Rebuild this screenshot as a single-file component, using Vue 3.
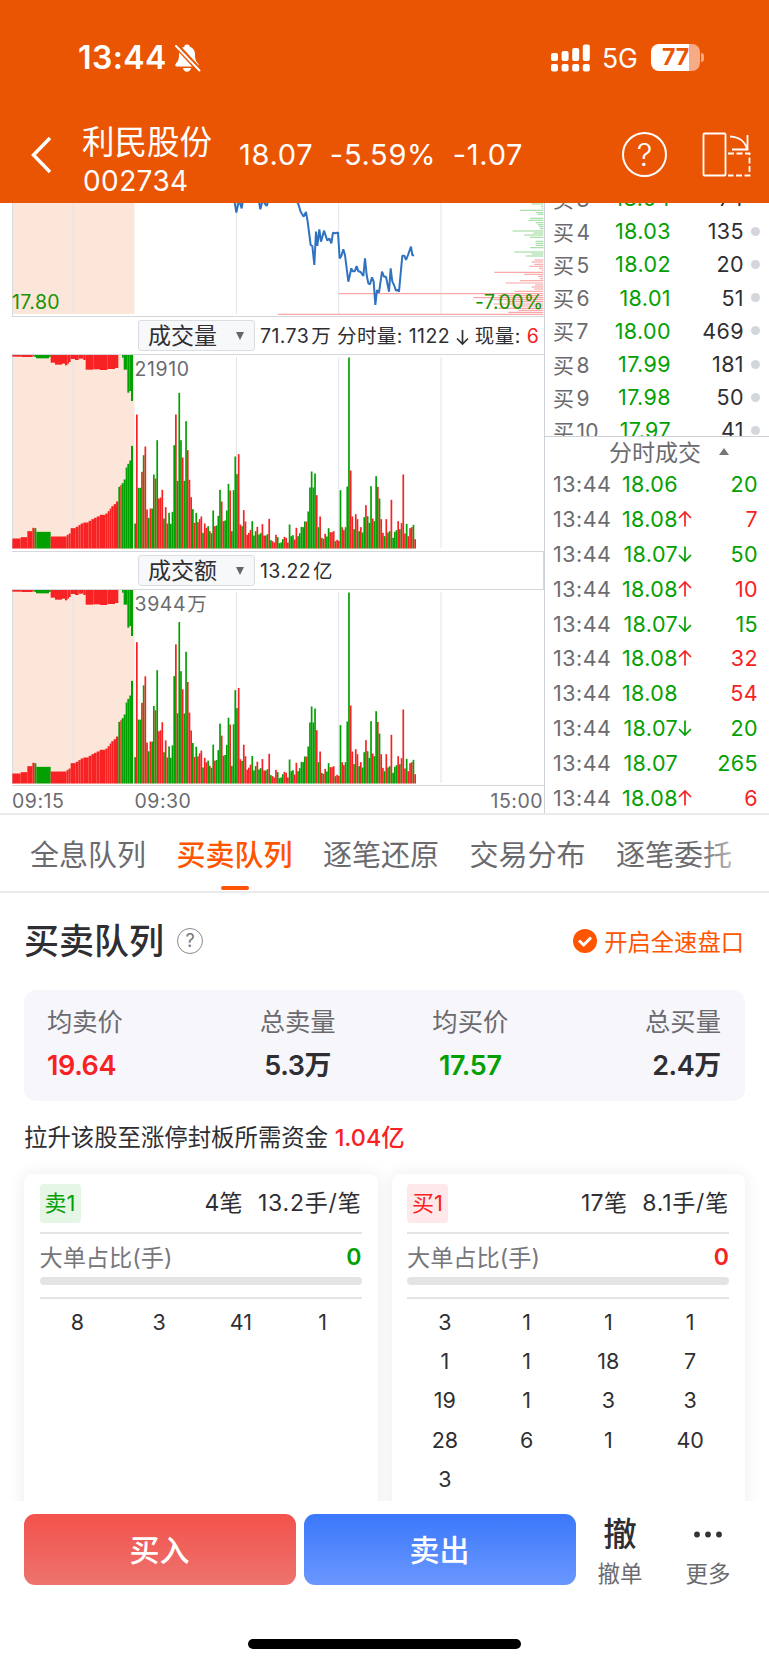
<script setup>
// one entry per minute from 09:30, negative = green bar
const minutes = [
    -75, 402, -182, -182, 230, -280, 306, 117, -92, 120, -120, -222, 210, -325, 150, 153, 176, -90, 124, 75,
    -107, -74, -110, -310, 402, -203, -467, -325, 273, -203, -382, 295, 206, 154, -118, 77, -107, 79, 88, 96,
    -47, 75, 62, -67, 52, -46, -114, 67, -69, -98, -176, 141, 82, -84, -114, -194, 174, -52, -175, -276,
    -223, 283, 72, -67, 115, 81, 41, 47, 56, -82, -39, -52, 65, -42, -46, 73, 39, -39, -43, 89,
    -25, 22, 18, 41, -34, -16, -18, -28, 35, 32, 18, -72, -37, -40, 27, 62, -37, -46, -65, -64,
    -81, 81, -111, -183, -231, -183, -225, 160, -64, 96, -32, 29, 44, -36, -61, 49, 49, 52, -22, 26,
    23, -175, 64, 55, -64, -186, -573, 234, 96, -58, 103, 88, -52, 64, -48, -94, 130, -97, -77, -187,
    90, -82, -217, 185, -150, 88, 47, -37, 88, -48, -52, 146, -32, -50, -55, 82, -58, 76, 222, 45,
    -74, 37, 61, 64, -71, 28
]

// call auction: [from, to, size, green]
const auctionBottom = [
    [37, 62, 30, 0], [62, 82, 34, 0], [82, 97, 52, 0], [97, 104, 62, 0], [104, 109, 61, 1], [109, 152, 50, 1],
    [152, 200, 36, 0], [200, 206, 41, 0], [206, 212, 45, 0], [212, 227, 61, 0], [227, 235, 65, 0], [235, 242, 70, 0],
    [242, 250, 75, 0], [250, 266, 78, 0], [266, 274, 83, 0], [274, 282, 88, 0], [282, 290, 92, 0], [290, 299, 96, 0],
    [299, 316, 101, 0], [316, 323, 105, 0], [323, 329, 112, 0], [329, 334, 120, 0], [334, 341, 127, 0], [341, 348, 133, 0],
    [348, 355, 141, 0], [355, 361, 185, 1], [361, 365, 190, 0], [365, 371, 196, 1], [371, 377, 207, 1], [377, 382, 243, 1],
    [382, 388, 254, 1], [388, 393, 264, 1], [393, 399, 308, 1]
]
const auctionTop = [
    [37, 66, 5, 0], [66, 98, 6, 0], [98, 103, 4, 0], [103, 108, 6, 1], [108, 147, 10, 1], [147, 152, 6, 1],
    [152, 165, 23, 0], [165, 186, 29, 0], [186, 195, 26, 0], [195, 202, 31, 0], [202, 207, 26, 0], [207, 212, 21, 0],
    [212, 225, 12, 0], [225, 236, 15, 0], [236, 250, 11, 0], [250, 257, 15, 0], [257, 280, 44, 0], [280, 300, 43, 0],
    [300, 322, 45, 0], [322, 345, 42, 0], [345, 355, 39, 0], [366, 371, 8, 1], [371, 382, 44, 1], [382, 388, 113, 1],
    [388, 393, 108, 1], [393, 399, 138, 1]
]

const red = '#f62223'
const green = '#03a003'

function buildBars(baseline, top, boost) {
    const bars = []
    auctionBottom.forEach(([from, to, size, isGreen]) => {
        bars.push({ x: from / 3, w: (to - from) / 3, y: baseline - size / 3, h: size / 3, fill: isGreen ? green : red })
    })
    auctionTop.forEach(([from, to, size, isGreen]) => {
        bars.push({ x: from / 3, w: (to - from) / 3, y: top, h: size / 3, fill: isGreen ? green : red })
    })
    minutes.forEach((value, i) => {
        const factor = 1 + boost * Math.max(0, 1 - i / 80)
        const h = (Math.abs(value) / 3) * factor
        bars.push({ x: 134.3 + i * 1.697, w: 1.7, y: baseline - h, h, fill: value < 0 ? green : red })
    })
    return bars
}

const volumeBars = buildBars(193.5, 0, 0)
const amountBars = buildBars(193.5, 0, 0.055)

// price distribution on the right edge: [y, left]
const greenLevels = [
    [12, 440], [19, 468], [25, 472], [31, 405], [38, 452], [43, 458], [55, 435], [61, 430], [68, 452], [74, 458],
    [80, 462], [86, 465], [93, 383], [99, 445], [105, 418], [112, 435], [124, 452], [130, 452], [136, 452],
    [143, 435], [156, 388], [162, 440], [168, 422]
]
const redLevels = [
    [180, 448], [186, 440], [193, 448], [199, 433], [205, 462], [211, 470], [217, 328], [223, 418], [229, 460],
    [236, 465], [242, 405], [249, 362], [255, 450], [261, 440], [267, 448], [274, 388], [281, -139], [287, 340],
    [293, 265], [299, 325], [305, 365], [312, 325], [318, 380], [325, 340], [331, 400], [337, 370], [343, -322]
]

const priceLines = [
    '703,0 709,38 717,0 725,25 729,0',
    '776,0 781,28 788,0 794,10 800,18 806,0',
    '888,0 895,12 902,35 911,50 918,36 923,65 932,135 937,138 943,195 948,95 952,138 958,88 963,125 972,92 982,122 988,115 994,130 999,98 1006,100 1014,97 1019,175 1024,168 1030,148 1035,165 1045,245 1054,205 1058,214 1064,214 1070,198 1075,214 1082,216 1090,228 1095,175 1100,225 1105,250 1110,253 1116,232 1121,245 1126,315 1131,270 1137,278 1146,215 1152,230 1158,230 1167,275 1172,205 1177,245 1182,255 1188,272 1193,270 1197,275 1207,167 1213,167 1218,180 1224,165 1233,140 1237,165 1242,167'
]

const bids = [
    { level: 3, price: '18.04', volume: 74 },
    { level: 4, price: '18.03', volume: 135 },
    { level: 5, price: '18.02', volume: 20 },
    { level: 6, price: '18.01', volume: 51 },
    { level: 7, price: '18.00', volume: 469 },
    { level: 8, price: '17.99', volume: 181 },
    { level: 9, price: '17.98', volume: 50 },
    { level: 10, price: '17.97', volume: 41 }
]

const ticks = [
    { price: '18.06', arrow: '', volume: 20, side: 'green' },
    { price: '18.08', arrow: 'up', volume: 7, side: 'red' },
    { price: '18.07', arrow: 'down', volume: 50, side: 'green' },
    { price: '18.08', arrow: 'up', volume: 10, side: 'red' },
    { price: '18.07', arrow: 'down', volume: 15, side: 'green' },
    { price: '18.08', arrow: 'up', volume: 32, side: 'red' },
    { price: '18.08', arrow: '', volume: 54, side: 'red' },
    { price: '18.07', arrow: 'down', volume: 20, side: 'green' },
    { price: '18.07', arrow: '', volume: 265, side: 'green' },
    { price: '18.08', arrow: 'up', volume: 6, side: 'red' }
]

const tabs = ['全息队列', '买卖队列', '逐笔还原', '交易分布', '逐笔委托', '逐笔']

const stats = [
    { label: '均卖价', value: '19.64', color: 'red' },
    { label: '总卖量', value: '5.3万', color: '' },
    { label: '均买价', value: '17.57', color: 'green' },
    { label: '总买量', value: '2.4万', color: '' }
]

const queues = [
    { name: '卖1', side: 'green', count: '4笔', average: '13.2手/笔', orders: [8, 3, 41, 1] },
    { name: '买1', side: 'red', count: '17笔', average: '8.1手/笔', orders: [3, 1, 1, 1, 1, 1, 18, 7, 19, 1, 3, 3, 28, 6, 1, 40, 3] }
]
</script>

<template>
    <div class="page">
        <header class="header">
            <div class="status">
                <span class="status__time">13:44</span>
                <svg class="status__bell" width="27" height="28" viewBox="0 0 27 28">
                    <path fill="#fff" d="M13 0.5C10.8.5 10.3 2 10.3 2.8 6.5 4 5 7.200 5 10.500C5 16 3.700 17.500 2 19.500C.8 21 1 22.500 2.500 22.500H23.500C25 22.500 25.200 21 24 19.500C22.300 17.500 21 16 21 10.500C21 7 19.400 4 15.700 2.800C15.700 2 15.200.5 13 .5ZM9 24H17C16.600 26.500 15 27.700 13 27.700S9.400 26.500 9 24Z" />
                    <path stroke="#ea5504" stroke-width="5.500" d="M1 0L27 28" />
                    <path stroke="#fff" stroke-width="2" stroke-linecap="round" d="M2 2L25.500 26.500" />
                </svg>
                <svg class="status__signal" width="39" height="28" viewBox="0 0 39 28" fill="#fff">
                    <rect x="0" y="9" width="7" height="8" rx="2" />
                    <rect x="10.600" y="7" width="7" height="10" rx="2" />
                    <rect x="21.200" y="4" width="7" height="13" rx="2" />
                    <rect x="31.800" y="0.500" width="7" height="16.500" rx="2" />
                    <rect v-for="n in 4" :key="n" :x="(n - 1) * 10.6" y="20" width="7" height="7.500" rx="2" />
                </svg>
                <span class="status__net">5G</span>
                <div class="battery"><span>77</span></div>
                <i class="battery__nub"></i>
            </div>
            <div class="nav">
                <svg class="nav__back" width="22" height="40" viewBox="0 0 22 40">
                    <path fill="none" stroke="#fff" stroke-width="3.400" d="M20 3L3.500 20L20 37" />
                </svg>
                <div class="nav__stock">
                    <b>利民股份</b>
                    <span>002734</span>
                </div>
                <div class="nav__quote">
                    <span>18.07</span>
                    <span>-5.59%</span>
                    <span>-1.07</span>
                </div>
                <div class="nav__help">?</div>
                <svg class="nav__rotate" width="50" height="46" viewBox="0 0 50 46" fill="none" stroke="#fff" stroke-width="1.800">
                    <rect x="1.500" y="1.500" width="22" height="42" rx="1" />
                    <path stroke-dasharray="6 2.500" d="M26 21.500H47.500V43.500H26" />
                    <path d="M28 4.500C37 5 43.500 9.500 44.800 17M45.500 3V17.500H30" />
                </svg>
            </div>
        </header>

        <main class="market">
            <section class="charts">
                <svg class="chart chart--price" width="532" height="113" viewBox="12 203 532 113">
                    <rect x="12" y="203" width="122.500" height="111" fill="#fce6da" />
                    <path stroke="#e0e5ea" d="M73 203V314M236.500 203V314M338.700 203V314M441 203V314" />
                    <path stroke="#d8dce2" d="M12.500 203V316" />
                    <g transform="translate(385 200) scale(.33333)">
                        <path v-for="level in greenLevels" :key="level[0]" stroke="#a3dca3" stroke-width="3.500" :d="`M${level[1]} ${level[0]}H475`" />
                        <path v-for="level in redLevels" :key="level[0]" stroke="#f9a7a8" stroke-width="3.500" :d="`M${level[1]} ${level[0]}H475`" />
                    </g>
                    <g transform="translate(0 200) scale(.33333)" fill="none" stroke="#2f72c0" stroke-width="6" stroke-linejoin="bevel">
                        <polyline v-for="line in priceLines" :key="line" :points="line" />
                    </g>
                    <text class="price-label" x="12" y="309">17.80</text>
                    <text class="price-label" x="543.500" y="309" text-anchor="end">-7.00%</text>
                </svg>
                <div class="toolbar">
                    <div class="select">成交量<i></i></div>
                    <span class="toolbar__text">71.73<em>万</em> 分时量: 1122 <svg width="13" height="18" viewBox="0 0 13 18"><path fill="none" stroke="#333" stroke-width="1.700" d="M6.500 2V16M1 10.500L6.500 16L12 10.500" /></svg> 现量: <span class="red">6</span></span>
                </div>
                <svg class="chart" width="532" height="196" viewBox="12 0 532 196">
                    <rect x="12" y="0" width="122.500" height="193.500" fill="#fce6da" />
                    <path stroke="#e0e5ea" d="M73 0V193M236.500 2V193M338.700 2V193M441 2V193" />
                    <path stroke="#d8dce2" d="M12.500 0V194" />
                    <rect v-for="(bar, i) in volumeBars" :key="i" :x="bar.x" :y="bar.y" :width="bar.w" :height="bar.h" :fill="bar.fill" />
                    <text class="scale-label" x="134.500" y="21">21910</text>
                </svg>
                <div class="toolbar toolbar--amount">
                    <div class="select">成交额<i></i></div>
                    <span class="toolbar__text">13.22<em>亿</em></span>
                </div>
                <svg class="chart" width="532" height="195" viewBox="12 0 532 195">
                    <rect x="12" y="0" width="122.500" height="193.500" fill="#fce6da" />
                    <path stroke="#e0e5ea" d="M73 0V193M236.500 2V193M338.700 2V193M441 2V193" />
                    <path stroke="#d8dce2" d="M12.500 0V194" />
                    <rect v-for="(bar, i) in amountBars" :key="i" :x="bar.x" :y="bar.y" :width="bar.w" :height="bar.h" :fill="bar.fill" />
                    <text class="scale-label" x="134.500" y="21">3944<tspan dx="1">万</tspan></text>
                </svg>
                <div class="axis">
                    <span>09:15</span>
                    <span>09:30</span>
                    <span>15:00</span>
                </div>
            </section>

            <aside class="book">
                <div class="bids">
                    <div v-for="bid in bids" :key="bid.level" class="bid">
                        <span class="bid__name">买<span>{{ bid.level }}</span></span>
                        <span class="bid__price">{{ bid.price }}</span>
                        <span class="bid__volume">{{ bid.volume }}</span>
                        <i></i>
                    </div>
                </div>
                <div class="book__title">分时成交<i></i></div>
                <div v-for="(tick, i) in ticks" :key="i" class="tick">
                    <span class="tick__time">13:44</span>
                    <span class="tick__price">{{ tick.price }}</span>
                    <svg class="tick__arrow" width="14" height="18" viewBox="0 0 14 18" fill="none" stroke-width="1.700">
                        <path v-if="tick.arrow === 'up'" stroke="#f62223" d="M7 16.500V2M1 8L7 2L13 8" />
                        <path v-if="tick.arrow === 'down'" stroke="#03a003" d="M7 1.500V16M1 10L7 16L13 10" />
                    </svg>
                    <span class="tick__volume" :class="tick.side">{{ tick.volume }}</span>
                </div>
            </aside>
        </main>

        <nav class="tabs">
            <div v-for="(tab, i) in tabs" :key="i" class="tab" :class="{ 'tab--active': i === 1 }">{{ tab }}</div>
        </nav>

        <section class="queue">
            <div class="queue__head">
                <h2>买卖队列</h2>
                <span class="queue__help">?</span>
                <div class="queue__speed">
                    <svg width="24" height="24" viewBox="0 0 24 24">
                        <circle cx="12" cy="12" r="12" fill="#ff5500" />
                        <path fill="none" stroke="#fff" stroke-width="3" d="M6 11.500L10.700 16L18 8.500" />
                    </svg>
                    开启全速盘口
                </div>
            </div>

            <div class="stats">
                <div v-for="stat in stats" :key="stat.label" class="stat">
                    <span>{{ stat.label }}</span>
                    <b :class="stat.color">{{ stat.value }}</b>
                </div>
            </div>

            <p class="limit">拉升该股至涨停封板所需资金 <b>1.04亿</b></p>

            <div class="cards">
                <div v-for="queue in queues" :key="queue.name" class="card">
                    <div class="card__head">
                        <span class="badge" :class="`badge--${queue.side}`">{{ queue.name }}</span>
                        <span class="card__count">{{ queue.count }}</span>
                        <span class="card__average">{{ queue.average }}</span>
                    </div>
                    <div class="card__ratio">
                        <span>大单占比(手)</span>
                        <b :class="queue.side">0</b>
                    </div>
                    <div class="card__bar"></div>
                    <div class="card__orders">
                        <span v-for="(order, i) in queue.orders" :key="i">{{ order }}</span>
                    </div>
                </div>
            </div>
        </section>

        <footer class="footer">
            <div class="actions">
                <button class="button button--buy">买入</button>
                <button class="button button--sell">卖出</button>
                <div class="action action--cancel">
                    <b>撤</b>
                    <span>撤单</span>
                </div>
                <div class="action action--more">
                    <svg width="32" height="32" viewBox="0 0 32 32" fill="#333">
                        <circle cx="5" cy="16.500" r="2.900" />
                        <circle cx="16" cy="16.500" r="2.900" />
                        <circle cx="27" cy="16.500" r="2.900" />
                    </svg>
                    <span>更多</span>
                </div>
            </div>
            <div class="home"></div>
        </footer>
    </div>
</template>

<style>
body {
    margin: 0;
    background: #fff;
}
</style>

<style scoped>
.page {
    width: 769px;
    height: 1665px;
    overflow: hidden;
    display: flex;
    flex-direction: column;
    font-family: Inter, 'Noto Sans CJK SC', sans-serif;
    color: #2f2f33;
    background: #fff;
}

.page * {
    box-sizing: border-box;
}

i,
em {
    font-style: normal;
}

.red {
    color: #f62223;
}

.green {
    color: #03a003;
}

.header {
    height: 203px;
    flex: none;
    background: #ea5504;
    color: #fff;
}

.status {
    display: flex;
    align-items: center;
    height: 72px;
    padding: 43px 0 0 78px;
}

.status__time {
    width: 96px;
    font-size: 32px;
    font-weight: 600;
    letter-spacing: 0.4px;
}

.status__signal {
    margin-left: 350px;
}

.status__net {
    width: 61px;
    padding-left: 12px;
    font-size: 26.500px;
}

.battery {
    width: 49px;
    height: 27px;
    border-radius: 8px;
    background: linear-gradient(to right, #fff 77%, #f5ab85 77%);
    color: #ea5504;
    font-size: 23px;
    font-weight: 700;
    line-height: 27px;
    text-align: center;
}

.battery__nub {
    width: 3px;
    height: 9px;
    margin-left: 1px;
    border-radius: 0 4px 4px 0;
    background: #f5ab85;
}

.nav {
    display: flex;
    align-items: center;
    height: 125px;
    padding: 40px 0 0 30px;
}

.nav__stock {
    display: flex;
    flex-direction: column;
    width: 157px;
    margin-left: 30px;
    padding-top: 14px;
}

.nav__stock b {
    font-size: 32.500px;
    font-weight: 400;
    line-height: 39px;
}

.nav__stock span {
    padding-left: 1px;
    font-size: 28px;
    line-height: 38px;
    letter-spacing: 0.4px;
}

.nav__quote {
    display: flex;
    gap: 16.500px;
    width: 383px;
    font-size: 29px;
    letter-spacing: 0.7px;
}

.nav__help {
    width: 45px;
    height: 45px;
    border: 2px solid #fff;
    border-radius: 50%;
    font-size: 31px;
    font-weight: 300;
    line-height: 41px;
    text-align: center;
}

.nav__rotate {
    margin-left: 35px;
}

.market {
    display: flex;
    flex: none;
    height: 612px;
    border-bottom: 2px solid #ebebed;
}

.charts {
    width: 545px;
    padding-left: 12px;
    border-right: 1px solid #ced2d8;
}

.chart {
    display: block;
    border-bottom: 1px solid #d4d8dd;
    box-sizing: content-box !important;
}

.price-label {
    font-size: 19.500px;
    fill: #189400;
    letter-spacing: 0.4px;
}

.scale-label {
    font-size: 19.500px;
    fill: #6b6b6f;
    letter-spacing: 0.6px;
}

.toolbar {
    display: flex;
    align-items: center;
    height: 38px;
    padding-left: 126px;
    border-bottom: 1px solid #d4d8dd;
}

.toolbar--amount {
    border-right: 1px solid #d4d8dd;
}

.select {
    display: flex;
    align-items: center;
    justify-content: space-between;
    width: 117px;
    height: 31px;
    padding: 1px 10px 0 9px;
    border: 1px solid #dadee3;
    border-radius: 3px;
    background: #f7f8fa;
    font-size: 23px;
    line-height: 29px;
}

.select i {
    border: 4.500px solid transparent;
    border-top: 8px solid #666;
    border-bottom: 0;
}

.toolbar__text {
    padding-left: 5px;
    font-size: 19.500px;
    letter-spacing: 0.42px;
    line-height: 34px;
    white-space: nowrap;
}

.toolbar__text em {
    padding-left: 2px;
}

.toolbar__text svg {
    vertical-align: -3px;
}

.axis {
    display: flex;
    height: 28px;
    padding-right: 1px;
    color: #6b6b6f;
    font-size: 19.500px;
    letter-spacing: 0.5px;
    line-height: 30px;
}

.axis span:first-child {
    width: 122.500px;
}

.axis span:nth-child(2) {
    flex: 1;
}

.book {
    flex: 1;
    overflow: hidden;
}

.bids {
    display: flex;
    flex-direction: column;
    justify-content: flex-end;
    height: 234px;
    overflow: hidden;
    border-bottom: 1px solid #ced2d8;
}

.bid {
    position: relative;
    top: 11px;
    display: flex;
    flex: none;
    align-items: center;
    height: 33.200px;
    padding-left: 8px;
    font-size: 21.500px;
    letter-spacing: 0.4px;
}

.bid__name {
    width: 57px;
    padding-bottom: 1px;
    color: #6b6b6f;
    font-size: 21px;
    white-space: nowrap;
}

.bid__name span {
    padding-left: 2px;
}

.bid__price {
    width: 61px;
    color: #03a003;
    text-align: right;
}

.bid__volume {
    width: 73px;
    text-align: right;
}

.bid i {
    width: 9px;
    height: 9px;
    margin-left: 7px;
    border-radius: 50%;
    background: #d3d6db;
}

.book__title {
    display: flex;
    align-items: center;
    height: 30px;
    padding: 0 0 2px 64px;
    color: #6b6b6f;
    font-size: 23px;
}

.book__title i {
    margin-left: 18px;
    border: 5.500px solid transparent;
    border-bottom: 7px solid #77777b;
    border-top: 0;
}

.tick {
    display: flex;
    align-items: center;
    height: 34.800px;
    padding: 0 11px 0 8px;
    font-size: 21.500px;
    letter-spacing: 0.4px;
}

.tick__time {
    width: 64px;
    color: #6b6b6f;
    letter-spacing: 0.5px;
}

.tick__price {
    width: 61px;
    color: #03a003;
    text-align: right;
}

.tick__volume {
    flex: 1;
    text-align: right;
}

.tabs {
    position: relative;
    display: flex;
    flex: none;
    gap: 30.500px;
    height: 78px;
    padding-left: 30px;
    border-bottom: 2px solid #ebebed;
    overflow: hidden;
}

.tabs::after {
    content: '';
    position: absolute;
    right: 0;
    top: 0;
    width: 70px;
    height: 76px;
    background: linear-gradient(to right, rgba(255, 255, 255, 0), #fff 90%);
}

.tab {
    position: relative;
    flex: none;
    color: #6b6b6f;
    font-size: 29px;
    line-height: 82px;
}

.tab--active {
    color: #ff5500;
    font-weight: 500;
}

.tab--active::after {
    content: '';
    position: absolute;
    left: 44px;
    bottom: 1px;
    width: 28px;
    height: 4px;
    border-radius: 2px;
    background: #ff5500;
}

.queue {
    height: 608px;
    flex: none;
    padding: 0 24px;
    overflow: hidden;
}

.queue__head {
    display: flex;
    align-items: center;
    height: 97px;
    padding-bottom: 1px;
}

.queue__head h2 {
    margin: -5px 13px 0 0;
    font-size: 35px;
    font-weight: 500;
}

.queue__help {
    width: 26px;
    height: 26px;
    border: 1.500px solid #8a8a8e;
    border-radius: 50%;
    color: #77777b;
    font-size: 18px;
    line-height: 23px;
    text-align: center;
}

.queue__speed {
    display: flex;
    align-items: center;
    gap: 7px;
    margin-left: auto;
    padding: 0 1px 1px 0;
    color: #ff5500;
    font-size: 23.300px;
}

.stats {
    display: flex;
    justify-content: space-between;
    height: 111px;
    padding: 12px 24px 0 23px;
    border-radius: 12px;
    background: #f7f7fb;
}

.stat {
    display: flex;
    flex-direction: column;
    text-align: center;
}

.stat:first-child {
    width: 116px;
    text-align: left;
}

.stat:last-child {
    width: 116px;
    text-align: right;
}

.stat span {
    color: #6b6b6f;
    font-size: 25.300px;
    line-height: 40px;
}

.stat b {
    font-size: 27px;
    font-weight: 600;
    letter-spacing: -0.4px;
    line-height: 48px;
}

.limit {
    margin: 0;
    height: 73px;
    font-size: 23.400px;
    line-height: 73px;
}

.limit b {
    color: #f62223;
    font-weight: 500;
}

.cards {
    display: flex;
    gap: 14px;
}

.card {
    flex: 1;
    height: 360px;
    padding: 0 16px 0 15.500px;
    border-radius: 8px;
    background: #fff;
    box-shadow: 0 0 18px rgba(0, 0, 0, 0.08);
}

.card__head {
    display: flex;
    align-items: center;
    height: 60px;
    border-bottom: 2px solid #e4e4e4;
    font-size: 23px;
    line-height: 36px;
}

.badge {
    width: 41px;
    height: 39px;
    border-radius: 4px;
    font-size: 22px;
    line-height: 38px;
    text-align: center;
}

.badge--green {
    color: #03a003;
    background: #e5f5e6;
}

.badge--red {
    color: #f62223;
    background: #ffe8e9;
}

.card__count {
    margin: 0 15px 0 auto;
    letter-spacing: 0.3px;
}

.card__average {
    letter-spacing: 0.8px;
}

.card__ratio {
    display: flex;
    align-items: center;
    justify-content: space-between;
    height: 43px;
    color: #77777b;
    font-size: 23.200px;
}

.card__ratio b {
    padding-top: 2px;
    font-size: 23px;
    font-weight: 600;
}

.card__ratio .green {
    color: #03a003;
}

.card__ratio .red {
    color: #f62223;
}

.card__bar {
    height: 8px;
    border-radius: 4px;
    background: #e4e4e4;
}

.card__orders {
    display: grid;
    grid-template-columns: repeat(4, 1fr);
    margin: 12px -2px 0 -3px;
    padding-top: 6px;
    text-align: center;
    font-size: 21.500px;
    line-height: 39.200px;
    background: linear-gradient(#e4e4e4, #e4e4e4) 3px 0 / calc(100% - 5px) 2px no-repeat;
}

.footer {
    flex: 1;
    background: #fff;
}

.actions {
    display: flex;
    gap: 8px;
    padding: 13px 0 0 24px;
}

.button {
    width: 272px;
    height: 71px;
    padding: 0 1px 4px 0;
    border: 0;
    border-radius: 11px;
    color: #fff;
    font-family: inherit;
    font-size: 30px;
    font-weight: 500;
}

.button--buy {
    background: linear-gradient(#f3524b, #ed736e);
}

.button--sell {
    background: linear-gradient(#3b78fa, #6a97ff);
}

.action {
    display: flex;
    flex-direction: column;
    align-items: center;
    width: 80px;
}

.action--cancel {
    margin-left: -4px;
}

.action b {
    height: 40px;
    font-size: 33.500px;
    font-weight: 500;
    line-height: 41px;
}

.action span {
    color: #6b6b6f;
    font-size: 22.500px;
    line-height: 40px;
}

.action--more svg {
    height: 40px;
}

.home {
    width: 273px;
    height: 10px;
    margin: 45px auto 0;
    border-radius: 5px;
    background: #000;
}
</style>
